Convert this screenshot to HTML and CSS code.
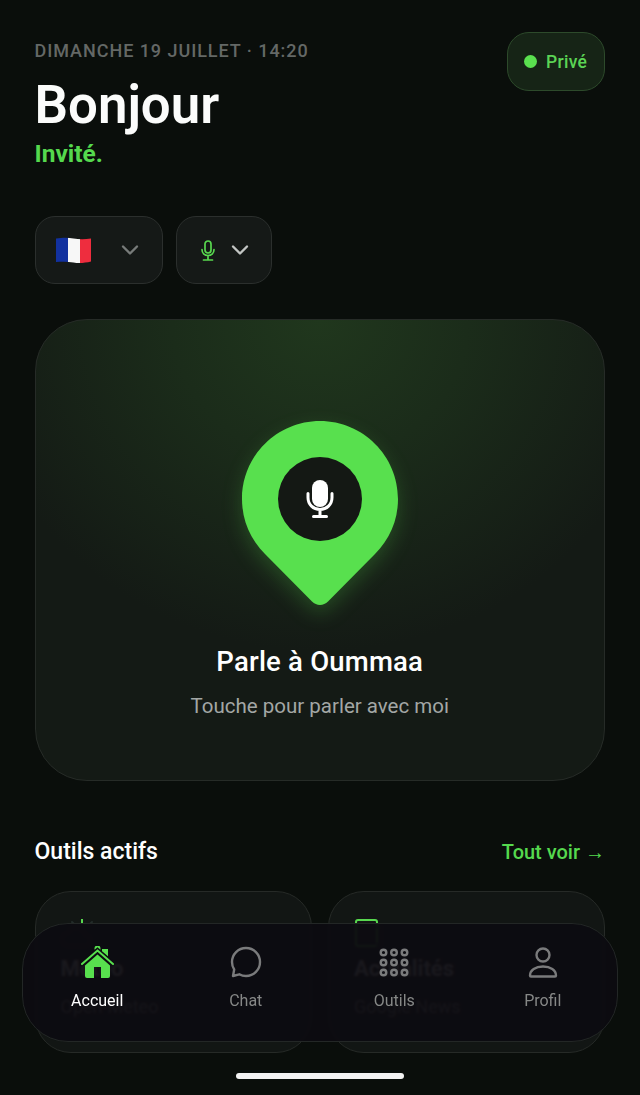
FILE: index.html
```html
<!DOCTYPE html>
<html lang="fr">
<head>
    <meta charset="UTF-8">
    <meta name="viewport" content="width=device-width, initial-scale=1.0">
    <title>Oummaa</title>
    <link rel="stylesheet" href="styles.css">
</head>
<body>
    <main class="page">
        <header class="top">
            <div class="greeting">
                <div class="date">DIMANCHE 19 JUILLET · 14:20</div>
                <h1>Bonjour</h1>
                <div class="guest">Invité.</div>
            </div>
            <div class="badge"><span class="dot"></span>Privé</div>
        </header>

        <div class="selectors">
            <button class="select select-lang">
                <svg class="flag" viewBox="0 0 37 28" width="37" height="28">
                    <defs>
                        <clipPath id="flagWave"><path d="M1 2.500C8 1.500 13 1.500 18.500 2.500S30 3.500 36 2.500V25.500C30 27 24 27.500 18.500 26.500S8 25.500 1 26Z"/></clipPath>
                    </defs>
                    <g clip-path="url(#flagWave)">
                        <rect x="0" y="0" width="13" height="28" fill="#12319f"/>
                        <rect x="13" y="0" width="12" height="28" fill="#f7f7f7"/>
                        <rect x="25" y="0" width="12" height="28" fill="#ee2d3e"/>
                    </g>
                </svg>
                <svg class="chevron chevron-dim" viewBox="0 0 18 12" width="18" height="12"><path d="M2 2.500l7 7 7-7"/></svg>
            </button>
            <button class="select select-mic">
                <svg class="mini-mic" viewBox="0 0 16 21" width="16" height="21">
                    <rect x="5" y="1" width="6" height="12" rx="3"/>
                    <path d="M2 9.500c0 3.600 2.600 6 6 6s6-2.400 6-6M8 15.500V20M3.500 20h9"/>
                </svg>
                <svg class="chevron" viewBox="0 0 18 12" width="18" height="12"><path d="M2 2.500l7 7 7-7"/></svg>
            </button>
        </div>

        <section class="hero">
            <svg class="pin" viewBox="0 0 156 186" width="156" height="186">
                <path class="pin-shape" d="M78 0C121 0 156 35 156 78C156 100 147 119 133 133L86 180.500C81.500 185 74.500 185 70 180.500L23 133C9 119 0 100 0 78C0 35 35 0 78 0Z"/>
                <circle class="pin-hole" cx="78" cy="78" r="42"/>
                <rect class="mic-body" x="70" y="59" width="16" height="27" rx="8"/>
                <path class="mic-stand" d="M66 72.500v4c0 7 5.300 12 12 12s12-5 12-12v-4M78 88.500v7M71.500 95.500h13"/>
            </svg>
            <h2>Parle à Oummaa</h2>
            <p>Touche pour parler avec moi</p>
        </section>

        <div class="tools-head">
            <h3>Outils actifs</h3>
            <a class="see-all">Tout voir →</a>
        </div>

        <div class="tools">
            <article class="tool">
                <svg class="tool-icon" viewBox="0 0 34 30" width="34" height="30">
                    <path class="green" d="M21 0v4"/>
                    <path d="M11 3l2 2M31 3l-2 2"/>
                    <path d="M8 27a6.500 6.500 0 0 1-1-13 9 9 0 0 1 17 2 5.500 5.500 0 0 1 0 11Z"/>
                </svg>
                <h4>Météo</h4>
                <p>Open-Meteo</p>
            </article>
            <article class="tool">
                <svg class="tool-icon" viewBox="0 0 30 30" width="30" height="30">
                    <rect class="green" x="2" y="1" width="21" height="26" rx="2"/>
                    <path d="M6 8h13M6 12h13M6 16h13M6 20h13M23 8h4v17a2 2 0 0 1-4 0"/>
                </svg>
                <h4>Actualités</h4>
                <p>Google News</p>
            </article>
        </div>
    </main>

    <nav class="tabbar">
        <a class="tab tab-active">
            <svg class="tab-icon" viewBox="0 0 34 34" width="34" height="34">
                <circle class="home-fill" cx="17.500" cy="2.500" r="3"/>
                <rect class="home-fill" x="22" y="3" width="6" height="9"/>
                <path class="home-mask" d="M2 18L17.500 4.500 33 18"/>
                <path class="home-roof" d="M2 18L17.500 4.500 33 18"/>
                <path class="home-fill" d="M17.500 8.500L30 19.500V30a2 2 0 0 1-2 2H21V21h-7v11H7a2 2 0 0 1-2-2V19.500Z"/>
            </svg>
            <span>Accueil</span>
        </a>
        <a class="tab">
            <svg class="tab-icon line" viewBox="0 0 34 34" width="34" height="34">
                <path d="M17 2C24.800 2 31 8.200 31 16S24.800 30 17 30c-2.400 0-4.700-.6-6.700-1.700L4 30l1.200-6.500C3.800 21.400 3 18.800 3 16 3 8.200 9.200 2 17 2Z"/>
            </svg>
            <span>Chat</span>
        </a>
        <a class="tab">
            <svg class="tab-icon line" viewBox="0 0 34 34" width="34" height="34">
                <circle cx="6.500" cy="6.500" r="2.800"/><circle cx="17" cy="6.500" r="2.800"/><circle cx="27.500" cy="6.500" r="2.800"/>
                <circle cx="6.500" cy="16.500" r="2.800"/><circle cx="17" cy="16.500" r="2.800"/><circle cx="27.500" cy="16.500" r="2.800"/>
                <circle cx="6.500" cy="26.500" r="2.800"/><circle cx="17" cy="26.500" r="2.800"/><circle cx="27.500" cy="26.500" r="2.800"/>
            </svg>
            <span>Outils</span>
        </a>
        <a class="tab">
            <svg class="tab-icon line" viewBox="0 0 34 34" width="34" height="34">
                <circle cx="17" cy="9" r="6.500"/>
                <path d="M4 29.500c0-5.500 5.500-9 13-9s13 3.500 13 9c0 .5-.3 1-1 1H5c-.7 0-1-.5-1-1Z"/>
            </svg>
            <span>Profil</span>
        </a>
    </nav>

    <div class="home-bar"></div>
</body>
</html>
```

FILE: styles.css
```css
* {
    box-sizing: border-box;
}
html, body {
    margin: 0;
    height: 100%;
}
body {
    font-family: Roboto, 'Noto Sans', sans-serif;
    background-color: #0a0e0b;
    color: #fff;
    overflow: hidden;
}
h1, h2, h3, h4, p {
    margin: 0;
}
.page {
    height: 1095px;
    padding: 32px 35px 0 34.500px;
    overflow: hidden;
}
.top {
    display: flex;
    justify-content: space-between;
    align-items: flex-start;
}
.date {
    margin-top: 8px;
    font-size: 18px;
    line-height: 21px;
    font-weight: 500;
    letter-spacing: 0.95px;
    color: #646866;
}
h1 {
    margin-top: 13px;
    font-size: 52.8px;
    line-height: 62px;
    font-weight: 600;
    color: #fbfcfb;
}
.guest {
    margin-top: 3px;
    font-size: 24.500px;
    line-height: 30px;
    font-weight: 700;
    color: #55d94e;
}
.badge {
    display: flex;
    align-items: center;
    gap: 9px;
    height: 59px;
    width: 98px;
    padding-left: 16px;
    border: 1.5px solid #2d4a2b;
    border-radius: 22px;
    background-color: #162416;
    color: #5bd455;
    font-size: 17.500px;
    font-weight: 500;
    letter-spacing: 0.3px;
}
.dot {
    width: 13px;
    height: 13px;
    border-radius: 50%;
    background-color: #5ae04f;
}
.selectors {
    display: flex;
    gap: 12.500px;
    margin-top: 47px;
}
.select {
    display: flex;
    align-items: center;
    height: 68px;
    padding: 0;
    border: 1.5px solid #2b2f2d;
    border-radius: 20px;
    background-color: #151917;
}
.select-lang {
    width: 128.500px;
    padding-left: 19px;
    gap: 29.500px;
}
.select-mic {
    width: 96px;
    padding-left: 23px;
    gap: 15.500px;
}
.chevron path {
    fill: none;
    stroke: #c2c5c3;
    stroke-width: 2.4;
    stroke-linecap: round;
    stroke-linejoin: round;
}
.chevron-dim path {
    stroke: #777b79;
}
.mini-mic rect, .mini-mic path {
    fill: none;
    stroke: #58d84f;
    stroke-width: 1.7;
    stroke-linecap: round;
}
.hero {
    display: flex;
    flex-direction: column;
    align-items: center;
    height: 462px;
    margin-top: 35px;
    padding-top: 101px;
    border: 1.5px solid #262b27;
    border-radius: 52px;
    background: radial-gradient(ellipse 62% 72% at 50% 0%, #20371d 0%, #1b2c1a 42%, #141a15 100%);
}
.pin {
    overflow: visible;
    filter: drop-shadow(0 8px 10px rgba(90, 224, 79, 0.22));
}
.pin-shape {
    fill: #58e04e;
}
.pin-hole {
    fill: #141814;
}
.mic-body {
    fill: #fff;
}
.mic-stand {
    fill: none;
    stroke: #fff;
    stroke-width: 3;
    stroke-linecap: round;
}
.hero h2 {
    margin-top: 37px;
    font-size: 27.500px;
    line-height: 36px;
    font-weight: 500;
    letter-spacing: 0.2px;
}
.hero p {
    margin-top: 12.500px;
    font-size: 20.500px;
    line-height: 26px;
    color: #a3a7a5;
}
.tools-head {
    display: flex;
    justify-content: space-between;
    align-items: center;
    margin-top: 55.500px;
}
.tools-head h3 {
    font-size: 23px;
    line-height: 30px;
    font-weight: 500;
}
.see-all {
    font-size: 20px;
    font-weight: 500;
    color: #55d94e;
}
.tools {
    display: grid;
    grid-template-columns: 277.500px 277px;
    gap: 16px;
    margin-top: 24.500px;
}
.tool {
    height: 162px;
    padding: 27px 25px 0;
    border: 1.5px solid #262a27;
    border-radius: 36px;
    background-color: #121614;
}
.tool-icon {
    display: block;
}
.tool-icon path, .tool-icon rect {
    fill: none;
    stroke: #232c2a;
    stroke-width: 2;
    stroke-linecap: round;
}
.tool-icon .green {
    stroke: #58d84f;
}
.tool h4 {
    margin-top: 5px;
    font-size: 22px;
    line-height: 30px;
    font-weight: 700;
    color: #f4f4f4;
}
.tool p {
    margin-top: 12px;
    font-size: 18px;
    line-height: 22px;
    color: #a3a7a5;
}
.tabbar {
    position: absolute;
    left: 22px;
    top: 923px;
    display: flex;
    width: 596px;
    height: 119px;
    border: 1.5px solid #232726;
    border-radius: 46px;
    background-color: rgba(13, 12, 17, 0.95);
    backdrop-filter: blur(1px);
}
.tab {
    flex: 1;
    display: flex;
    flex-direction: column;
    align-items: center;
    padding-top: 22px;
    font-size: 16px;
    font-weight: 400;
    color: #868887;
}
.tab span {
    margin-top: 11px;
    line-height: 20px;
}
.tab-active {
    color: #fff;
}
.tab-icon {
    display: block;
}
.line circle, .line path {
    fill: none;
    stroke: #7a7b7c;
    stroke-width: 2.4;
    stroke-linejoin: round;
}
.home-fill {
    fill: #58e04e;
}
.home-roof {
    fill: none;
    stroke: #58e04e;
    stroke-width: 2;
    stroke-linecap: round;
}
.home-mask {
    fill: none;
    stroke: #0d0c11;
    stroke-width: 5;
}
.home-bar {
    position: absolute;
    left: 236px;
    top: 1073px;
    width: 168px;
    height: 6px;
    border-radius: 3px;
    background-color: #f3f3f3;
}
```
